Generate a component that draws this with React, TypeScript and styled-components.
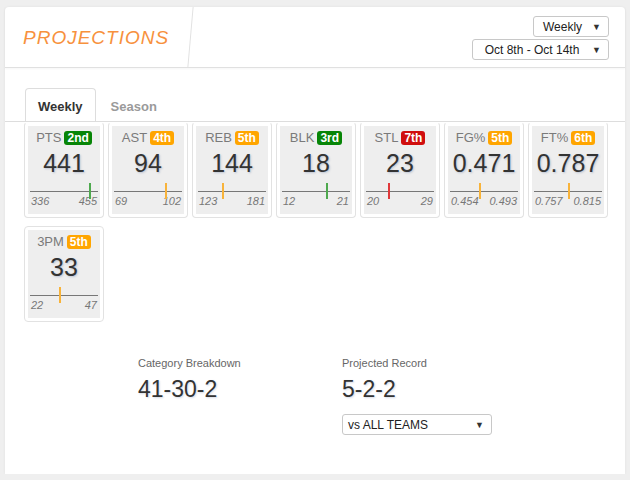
import React from "react";
import styled, { createGlobalStyle } from "styled-components";

const GlobalStyle = createGlobalStyle`
  html, body {
    margin: 0;
    padding: 0;
    background: #efefef;
    font-family: "Liberation Sans", Arial, sans-serif;
  }
`;

type Stat = {
  label: string;
  rank: string;
  tone: "green" | "orange" | "red";
  value: string;
  min: number;
  max: number;
  minText: string;
  maxText: string;
};

const stats: Stat[] = [
  { label: "PTS", rank: "2nd", tone: "green", value: "441", min: 336, max: 455, minText: "336", maxText: "455" },
  { label: "AST", rank: "4th", tone: "orange", value: "94", min: 69, max: 102, minText: "69", maxText: "102" },
  { label: "REB", rank: "5th", tone: "orange", value: "144", min: 123, max: 181, minText: "123", maxText: "181" },
  { label: "BLK", rank: "3rd", tone: "green", value: "18", min: 12, max: 21, minText: "12", maxText: "21" },
  { label: "STL", rank: "7th", tone: "red", value: "23", min: 20, max: 29, minText: "20", maxText: "29" },
  { label: "FG%", rank: "5th", tone: "orange", value: "0.471", min: 0.454, max: 0.493, minText: "0.454", maxText: "0.493" },
  { label: "FT%", rank: "6th", tone: "orange", value: "0.787", min: 0.757, max: 0.815, minText: "0.757", maxText: "0.815" },
  { label: "3PM", rank: "5th", tone: "orange", value: "33", min: 22, max: 47, minText: "22", maxText: "47" },
];

const badgeColors = { green: "#078507", orange: "#ffa500", red: "#d00e0e" };
const markColors = { green: "#4ea94e", orange: "#f8b33a", red: "#e0383a" };

export default function App() {
  return (
    <>
      <GlobalStyle />
      <Panel>
        <Header>
          <TitleBlock>
            <Title>PROJECTIONS</Title>
          </TitleBlock>
          <Pickers>
            <SelectBox $width={76}>
              <SelectText $center>Weekly</SelectText>
              <Caret>▼</Caret>
            </SelectBox>
            <SelectBox $width={137}>
              <SelectText $center>Oct 8th - Oct 14th</SelectText>
              <Caret>▼</Caret>
            </SelectBox>
          </Pickers>
        </Header>
        <Body>
          <Tabs>
            <Tab $active>Weekly</Tab>
            <Tab>Season</Tab>
          </Tabs>
          <TileGrid>
            {stats.map((s) => {
              const num = parseFloat(s.value);
              const pct = Math.max(0, Math.min(1, (num - s.min) / (s.max - s.min)));
              return (
                <Tile key={s.label}>
                  <TileInner>
                    <TileHead>
                      <StatName>{s.label}</StatName>
                      <Badge $tone={s.tone}>{s.rank}</Badge>
                    </TileHead>
                    <StatValue>{s.value}</StatValue>
                    <Range>
                      <Marker $tone={s.tone} style={{ left: `${pct * 100}%` }} />
                    </Range>
                    <RangeLabels>
                      <span>{s.minText}</span>
                      <span>{s.maxText}</span>
                    </RangeLabels>
                  </TileInner>
                </Tile>
              );
            })}
          </TileGrid>
          <Summary>
            <SummaryCol>
              <SummaryLabel>Category Breakdown</SummaryLabel>
              <SummaryValue>41-30-2</SummaryValue>
            </SummaryCol>
            <SummaryCol>
              <SummaryLabel>Projected Record</SummaryLabel>
              <SummaryValue>5-2-2</SummaryValue>
              <SelectBox $width={150} $mt={11}>
                <SelectText>vs ALL TEAMS</SelectText>
                <Caret>▼</Caret>
              </SelectBox>
            </SummaryCol>
          </Summary>
        </Body>
      </Panel>
    </>
  );
}

const Panel = styled.div`
  margin: 7px 5px 0 5px;
  width: 620px;
  height: 467px;
  background: #fff;
  border-radius: 4px 4px 0 0;
  box-shadow: 0 0 3px rgba(0, 0, 0, 0.06);
  display: flex;
  flex-direction: column;
`;

const Header = styled.div`
  height: 60px;
  flex-shrink: 0;
  border-bottom: 1px solid #e0e0e0;
  display: flex;
  justify-content: space-between;
  align-items: stretch;
  box-shadow: 0 1px 2px rgba(0, 0, 0, 0.04);
`;

const TitleBlock = styled.div`
  position: relative;
  width: 186px;
  display: flex;
  align-items: center;
  padding-left: 18px;
  box-sizing: border-box;
  &::after {
    content: "";
    position: absolute;
    top: 0;
    bottom: 0;
    right: 0;
    width: 1px;
    background: #e2e2e2;
    transform: skewX(-5deg);
  }
`;

const Title = styled.h1`
  margin: 0;
  font-size: 19px;
  font-weight: 400;
  font-style: italic;
  letter-spacing: 1px;
  color: #f7913d;
  padding-top: 1px;
`;

const Pickers = styled.div`
  display: flex;
  flex-direction: column;
  align-items: flex-end;
  gap: 2px;
  padding: 9px 16px 0 0;
`;

const SelectBox = styled.div<{ $width: number; $mt?: number }>`
  width: ${(p) => p.$width}px;
  height: 21px;
  margin-top: ${(p) => p.$mt ?? 0}px;
  box-sizing: border-box;
  border: 1px solid #c8c8c8;
  border-radius: 3px;
  background: #fff;
  display: flex;
  align-items: center;
  padding: 0 7px 0 5px;
  font-size: 12px;
  color: #222;
`;

const SelectText = styled.span<{ $center?: boolean }>`
  flex: 1;
  text-align: ${(p) => (p.$center ? "center" : "left")};
`;

const Caret = styled.span`
  font-size: 9px;
  color: #333;
  margin-left: 6px;
`;

const Body = styled.div`
  padding: 20px 17px 0 19px;
  flex: 1;
`;

const Tabs = styled.div`
  display: flex;
  border-bottom: 1px solid #ddd;
  margin: 0 -17px 0 -19px;
  padding-left: 20px;
  height: 33px;
`;

const Tab = styled.div<{ $active?: boolean }>`
  height: 33px;
  box-sizing: border-box;
  padding: 2px 12px 0 12px;
  display: flex;
  align-items: center;
  font-size: 13px;
  font-weight: 700;
  color: ${(p) => (p.$active ? "#333" : "#9a9a9a")};
  background: ${(p) => (p.$active ? "#fff" : "transparent")};
  border: 1px solid ${(p) => (p.$active ? "#ddd" : "transparent")};
  border-bottom: none;
  border-radius: 4px 4px 0 0;
  margin-bottom: -1px;
  margin-right: 2px;
`;

const TileGrid = styled.div`
  display: flex;
  flex-wrap: wrap;
  gap: 8px 4px;
  width: 588px;
`;

const Tile = styled.div`
  width: 80px;
  height: 96px;
  box-sizing: border-box;
  border: 1px solid #e2e2e2;
  border-top-color: transparent;
  border-radius: 4px;
  padding: 3px;
  background: #fff;
  &:nth-child(n + 8) {
    border-top-color: #e2e2e2;
  }
`;

const TileInner = styled.div`
  height: 100%;
  background: #eeeeee;
  display: flex;
  flex-direction: column;
  padding: 4px 2px 0 2px;
  box-sizing: border-box;
  & > * {
    flex-shrink: 0;
  }
`;

const TileHead = styled.div`
  display: flex;
  justify-content: center;
  align-items: center;
  gap: 3px;
  height: 15px;
`;

const StatName = styled.span`
  font-size: 13px;
  color: #7a7a7a;
`;

const Badge = styled.span<{ $tone: Stat["tone"] }>`
  background: ${(p) => badgeColors[p.$tone]};
  color: #fff;
  font-weight: 700;
  font-size: 12px;
  line-height: 14px;
  padding: 0 3px;
  border-radius: 3px;
`;

const StatValue = styled.div`
  text-align: center;
  font-size: 25px;
  color: #333;
  margin-top: 3px;
  height: 30px;
  line-height: 30px;
  text-shadow: 1px 1px 2px rgba(40, 70, 130, 0.25);
`;

const Range = styled.div`
  position: relative;
  height: 1px;
  background: #777;
  margin-top: 13px;
`;

const Marker = styled.div<{ $tone: Stat["tone"] }>`
  position: absolute;
  top: -8px;
  width: 2px;
  height: 16px;
  margin-left: -1px;
  background: ${(p) => markColors[p.$tone]};
`;

const RangeLabels = styled.div`
  display: flex;
  justify-content: space-between;
  font-size: 11px;
  font-style: italic;
  color: #777;
  margin-top: 3px;
  padding: 0 1px;
`;

const Summary = styled.div`
  display: flex;
  padding-left: 114px;
  margin-top: 35px;
`;

const SummaryCol = styled.div`
  width: 204px;
  display: flex;
  flex-direction: column;
  align-items: flex-start;
`;

const SummaryLabel = styled.div`
  font-size: 11px;
  color: #666;
`;

const SummaryValue = styled.div`
  font-size: 23px;
  color: #333;
  margin-top: 7px;
  text-shadow: 1px 1px 2px rgba(40, 70, 130, 0.2);
`;
